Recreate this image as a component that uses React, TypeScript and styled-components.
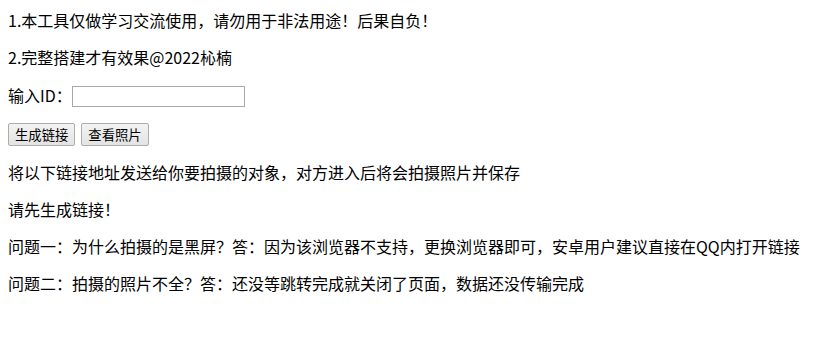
import React from "react";
import styled, { createGlobalStyle } from "styled-components";

const GlobalStyle = createGlobalStyle`
  html, body {
    margin: 0;
    padding: 0;
    background: #ffffff;
  }
  body {
    font-family: "Microsoft YaHei", "Noto Sans CJK SC", "Noto Sans", sans-serif;
    font-size: 16px;
    color: #000000;
  }
`;

const Page = styled.div`
  display: flex;
  flex-direction: column;
  gap: 16px;
  padding: 10px 8px 0 8px;
`;

const Line = styled.p`
  margin: 0;
  line-height: 21px;
  white-space: nowrap;
`;

const InputRow = styled.div`
  display: flex;
  align-items: center;
  height: 23px;
  line-height: 21px;
`;

const IdInput = styled.input`
  box-sizing: border-box;
  width: 173px;
  height: 21px;
  margin: 1px 0 0 0;
  padding: 1px 2px;
  border: 1px solid #a9a9a9;
  background: #ffffff;
  font: inherit;
  font-size: 13.33px;
  outline: none;
`;

const ButtonRow = styled.div`
  display: flex;
  align-items: center;
  gap: 6px;
  height: 23px;
`;

const Button = styled.button`
  box-sizing: border-box;
  height: 23px;
  padding: 0 6px;
  border: 1px solid #adadad;
  border-radius: 2px;
  background: linear-gradient(#f3f3f3, #e3e3e3);
  font-family: "Microsoft YaHei", "Noto Sans CJK SC", sans-serif;
  font-size: 13.33px;
  line-height: 21px;
  color: #000000;
  cursor: pointer;
`;

export default function App() {
  return (
    <>
      <GlobalStyle />
      <Page>
        <Line>1.本工具仅做学习交流使用，请勿用于非法用途！后果自负！</Line>
        <Line>2.完整搭建才有效果@2022杺楠</Line>
        <InputRow>
          输入ID：
          <IdInput type="text" />
        </InputRow>
        <ButtonRow>
          <Button>生成链接</Button>
          <Button>查看照片</Button>
        </ButtonRow>
        <Line>将以下链接地址发送给你要拍摄的对象，对方进入后将会拍摄照片并保存</Line>
        <Line>请先生成链接！</Line>
        <Line>
          问题一：为什么拍摄的是黑屏？答：因为该浏览器不支持，更换浏览器即可，安卓用户建议直接在QQ内打开链接
        </Line>
        <Line>问题二：拍摄的照片不全？答：还没等跳转完成就关闭了页面，数据还没传输完成</Line>
      </Page>
    </>
  );
}
